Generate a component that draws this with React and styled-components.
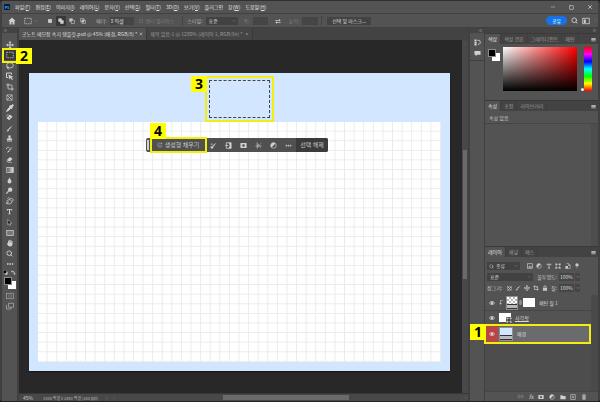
import React, { useState } from "react";
import styled, { createGlobalStyle, css } from "styled-components";
import {
  Lasso,
  Crop,
  Search,
  Ellipsis,
  Pipette,
  Link2,
  Move,
  X,
  Minus,
  Square,
  ChevronDown,
  ChevronUp,
  ChevronRight,
  ChevronLeft,
  ChevronsLeft,
  ChevronsRight,
} from "lucide-react";

const MENUS = [
  ["파일", "F"],
  ["편집", "E"],
  ["이미지", "I"],
  ["레이어", "L"],
  ["문자", "Y"],
  ["선택", "S"],
  ["필터", "T"],
  ["3D", "D"],
  ["보기", "V"],
  ["플러그인", ""],
  ["창", "W"],
  ["도움말", "H"],
];

// every drawing below sits on a 16 x 16 grid
const ICONS = {
  home: <path d="M8 1 1 8h2v7h4v-5h2v5h4V8h2z" fill="currentColor" />,
  marquee: (
    <rect x="1.5" y="2.5" width="13" height="11" fill="none" stroke="currentColor" strokeWidth="1.5" strokeDasharray="3 1.6" />
  ),
  selNew: <rect x="3" y="3" width="10" height="10" fill="currentColor" />,
  selAdd: <path d="M1 1h9v5h5v9H6v-5H1z" fill="currentColor" />,
  selSub: (
    <>
      <path d="M1 1h9v4H5v5H1z" fill="currentColor" />
      <rect x="6" y="6" width="8.5" height="8.5" fill="none" stroke="currentColor" strokeWidth="1.5" />
    </>
  ),
  selCross: (
    <>
      <path d="M1.5 1.5h9v9h-9zM5.5 5.5h9v9h-9z" fill="none" stroke="currentColor" strokeWidth="1.5" />
      <path d="M5.5 5.5h5v5h-5z" fill="currentColor" />
    </>
  ),
  swap: <path d="M1 5h10V2l4 4-4 3V7H1zM15 11H5V8l-4 4 4 3v-2h10z" fill="currentColor" />,
  layout: (
    <>
      <rect x="1.5" y="2.5" width="13" height="11" fill="none" stroke="currentColor" strokeWidth="1.6" />
      <path d="M3.5 5h4v7h-4z" fill="currentColor" />
    </>
  ),
  move: (
    <path
      d="M8 0l3 3.5H9V7h3.5V5L16 8l-3.5 3V9H9v3.5h2L8 16l-3-3.5h2V9H3.5v2L0 8l3.5-3v2H7V3.5H5z"
      fill="currentColor"
    />
  ),
  quick: (
    <>
      <path d="M1 2h10v3M1 2v9h3" fill="none" stroke="currentColor" strokeWidth="2" />
      <path d="M5 5l10 5-4 1 3 4-2 1-3-4-3 3z" fill="currentColor" />
    </>
  ),
  frame: (
    <path d="M2 2h12v12H2zM2 2l12 12M14 2 2 14" fill="none" stroke="currentColor" strokeWidth="1.5" />
  ),
  heal: (
    <>
      <path d="M9 1l6 5-8 8-6-5z" fill="currentColor" />
      <path d="M1 5c0-3 3-4 5-3" fill="none" stroke="currentColor" strokeWidth="1.5" />
      <path d="M6 6l4 4" stroke="#555" strokeWidth="1.5" />
    </>
  ),
  brush: <path d="M15 1 8 10 5.5 8zM5 9l2.5 2.5C7 14 4 15 1 14.5c2-1 2-4 4-5.500z" fill="currentColor" />,
  stamp: <path d="M5 1h6l-1 7h4v4H2V8h4zM2 13h12v2H2z" fill="currentColor" />,
  history: (
    <>
      <path d="M15 1 9 11 6.5 9zM6 10l2 2c-1 2-3 3-6 2.5 2-1 2-3 4-4.500z" fill="currentColor" />
      <path d="M1 7c0-4 4-5 7-3" fill="none" stroke="currentColor" strokeWidth="2" />
    </>
  ),
  eraser: <path d="M9 2l6 4-5 6H6l-4-3zM1 10l5 3.5h8V15H5L1 12z" fill="currentColor" />,
  gradient: (
    <>
      <defs>
        <linearGradient id="toolGradient">
          <stop offset="0" stopColor="#555" />
          <stop offset="1" stopColor="#ddd" />
        </linearGradient>
      </defs>
      <rect x="1.5" y="3" width="13" height="10" fill="url(#toolGradient)" stroke="currentColor" strokeWidth="1.5" />
    </>
  ),
  drop: <path d="M8 1c2 4 4.5 6 4.5 9a4.5 4.8 0 0 1-9 0C3.5 7 6 5 8 1z" fill="currentColor" />,
  dodge: (
    <>
      <circle cx="9.5" cy="6" r="5" fill="currentColor" />
      <path d="M6 9l-5 6" stroke="currentColor" strokeWidth="2.5" />
    </>
  ),
  pen: (
    <path
      d="M1 13c1-3 0-6 3-7l4-1 4 4-2 4-4 1zM8 5l3-3 4 4-3 3M1 13l5-4M3 3c2-2 4-2 5 0"
      fill="none"
      stroke="currentColor"
      strokeWidth="1.5"
    />
  ),
  type: <path d="M2 2h12v4h-1.5L12 4H9.2v8.5L11 13v1.5H5V13l1.8-.5V4H4l-.5 2H2z" fill="currentColor" />,
  path: <path d="M4 1l9 9H8.5l2 4-2 1-2-4L4 13z" fill="#111" stroke="currentColor" strokeWidth="1.3" />,
  rect: <rect x="1.5" y="3" width="13" height="10" fill="#777" stroke="currentColor" strokeWidth="1.5" />,
  hand: (
    <path
      d="M4 9V3.5h1.8V7h.6V1.5h1.8V7h.6V2h1.8v5.5h.6V4H13v6c0 3-1.5 5-4.5 5S4 13.5 1.5 9.5L3 8.5z"
      fill="currentColor"
    />
  ),
  mask: (
    <>
      <rect x="1" y="2.5" width="14" height="11" fill="none" stroke="currentColor" strokeWidth="1.3" />
      <circle cx="8" cy="8" r="3" fill="none" stroke="currentColor" strokeWidth="1.3" strokeDasharray="2 1" />
    </>
  ),
  screen: (
    <path d="M5 2.5h10v8H5zM1 6v8h9v-3" fill="none" stroke="currentColor" strokeWidth="1.5" />
  ),
  reset: (
    <>
      <rect x="5.5" y="5.5" width="9" height="9" fill="#ddd" />
      <rect x="1.5" y="1.5" width="9" height="9" fill="#000" stroke="#999" />
    </>
  ),
  turn: <path d="M4 1v3c6 0 8 2 8 7h3l-4 5-4-5h3c0-3-2-5-6-5v3L0 5z" fill="currentColor" />,
  adjust: (
    <>
      <circle cx="8" cy="8" r="6.2" fill="none" stroke="currentColor" strokeWidth="1.6" />
      <path d="M12.4 3.6A6.2 6.2 0 0 0 3.6 12.4z" fill="currentColor" />
    </>
  ),
  sparkle: (
    <>
      <path d="M10 2.5H6a4.5 5 0 0 0-4 5.5v1c0 3 2 5 6 5s5.5-2 5.5-5" fill="none" stroke="currentColor" strokeWidth="1.3" />
      <path d="M12 1l.8 2.2L15 4l-2.2.8L12 7l-.8-2.2L9 4l2.2-.8zM8 6l.7 1.8 1.8.7-1.8.7L8 11l-.7-1.8-1.8-.7 1.8-.7z" fill="currentColor" />
    </>
  ),
  brushCheck: (
    <>
      <path d="M15 1 8 11 5.5 8.5zM5 9l3 3-2 3H2l-1-5h2z" fill="currentColor" />
      <path d="M2 5h4M4 3v4" stroke="currentColor" strokeWidth="1.3" />
    </>
  ),
  invert: (
    <>
      <path d="M3 1.5h11v13H3z" fill="none" stroke="currentColor" strokeWidth="1.8" />
      <path d="M8 2h6v12H8l3-6zM1 7h6v2H1z" fill="currentColor" />
    </>
  ),
  maskSolid: (
    <path d="M1 2.5h14v11H1zM8 5a3 3 0 1 0 0 6 3 3 0 0 0 0-6z" fillRule="evenodd" fill="currentColor" />
  ),
  bucket: (
    <path d="M5 1v14M5 4l6 4-6 4M1 9h14M12 5l2-2M12 12l2 2" fill="none" stroke="currentColor" strokeWidth="1.4" />
  ),
  image: (
    <>
      <rect x="1.5" y="2" width="13" height="12" fill="none" stroke="currentColor" strokeWidth="1.8" />
      <path d="M3 12l3.5-5L9 10l2-2 2.5 4z" fill="currentColor" />
    </>
  ),
  shape: (
    <>
      <path d="M3.5 3.5h9v9h-9z" fill="none" stroke="currentColor" strokeWidth="1.5" />
      <path d="M1 1h4v4H1zM11 1h4v4h-4zM1 11h4v4H1zM11 11h4v4h-4z" fill="currentColor" />
    </>
  ),
  smart: (
    <>
      <path d="M4 1.5h6l4 4v9H7" fill="none" stroke="currentColor" strokeWidth="1.6" />
      <path d="M1 8h7v7H1zM9 2v5h5z" fill="currentColor" />
    </>
  ),
  toggle: (
    <>
      <circle cx="8" cy="5" r="4.5" fill="currentColor" />
      <path d="M8 9v6" stroke="#888" strokeWidth="2" />
    </>
  ),
  pixels: (
    <>
      <rect x="1.5" y="1.5" width="13" height="13" fill="none" stroke="currentColor" strokeWidth="1.3" />
      <path d="M3 3h3v3H3zM10 3h3v3h-3zM6.5 6.5h3v3h-3zM3 10h3v3H3zM10 10h3v3h-3z" fill="currentColor" />
    </>
  ),
  artboard: (
    <path d="M4 1v11h11M1 4h11v11M8 4l4 4" fill="none" stroke="currentColor" strokeWidth="1.8" />
  ),
  lock: (
    <>
      <path d="M2.5 7h11v8h-11z" fill="currentColor" />
      <path d="M5 7V5a3 3 0 0 1 6 0v2" fill="none" stroke="currentColor" strokeWidth="2" />
    </>
  ),
  eye: (
    <>
      <path d="M1 8c3.5-5.5 10.5-5.5 14 0-3.5 5.5-10.5 5.5-14 0z" fill="none" stroke="currentColor" strokeWidth="1.8" />
      <circle cx="8" cy="8" r="2.6" fill="currentColor" />
    </>
  ),
  clip: <path d="M13 2H6v8h3l-4 5-4-5h3V1h9z" fill="currentColor" />,
  folder: <path d="M1 3h5l2 2h7v9H1z" fill="currentColor" />,
  add: (
    <path d="M2 1.5h12v13H2zM8 5v6M5 8h6" fill="none" stroke="currentColor" strokeWidth="1.6" />
  ),
  trash: (
    <>
      <path d="M2 3.5h12M6 3V1h4v2" stroke="currentColor" strokeWidth="1.6" fill="none" />
      <path d="M3.5 5.5h9V15h-9z" fill="currentColor" opacity=".7" />
    </>
  ),
  menu: <path d="M1 3h14v2.5H1zM1 7h14v2.5H1zM1 11h14v2.5H1z" fill="currentColor" />,
  versions: (
    <>
      <path d="M1 1h5v4H1zM1 6h5v4H1zM1 11h5v4H1z" fill="currentColor" />
      <path d="M8 3h4c3 0 3 8 0 9H9" fill="none" stroke="currentColor" strokeWidth="2" />
    </>
  ),
  comment: <path d="M1 2h14v9H7l-3 4v-4H1z" fill="currentColor" />,
};

const Icon = ({ name, size = 8 }) => (
  <Glyph viewBox="0 0 16 16" width={size} height={size} aria-hidden="true">
    {ICONS[name]}
  </Glyph>
);

const TOOLS = [
  ["이동 도구", <Icon name="move" />],
  ["사각형 선택 윤곽 도구", <Icon name="marquee" />],
  ["올가미 도구", <Lasso size={8} strokeWidth={2.5} />],
  ["빠른 선택 도구", <Icon name="quick" />],
  ["자르기 도구", <Crop size={8} strokeWidth={2.5} />],
  ["프레임 도구", <Icon name="frame" size={7} />],
  ["스포이드 도구", <Pipette size={8} strokeWidth={3} fill="currentColor" />],
  ["복구 브러시 도구", <Icon name="heal" size={7} />],
  ["브러시 도구", <Icon name="brush" size={7} />],
  ["도장 도구", <Icon name="stamp" size={7} />],
  ["작업 내역 브러시", <Icon name="history" size={7} />],
  ["지우개 도구", <Icon name="eraser" size={7} />],
  ["그레이디언트 도구", <Icon name="gradient" />],
  ["흐림 효과 도구", <Icon name="drop" size={7} />],
  ["닷지 도구", <Icon name="dodge" size={7} />],
  ["펜 도구", <Icon name="pen" />],
  ["문자 도구", <Icon name="type" size={7} />],
  ["패스 선택 도구", <Icon name="path" size={7} />],
  ["사각형 도구", <Icon name="rect" />],
  ["손 도구", <Icon name="hand" />],
  ["돋보기 도구", <Search size={7} strokeWidth={3} />],
  ["도구 모음 편집", <Ellipsis size={8} strokeWidth={3} />],
];

const PanelTabs = ({ tabs }) => (
  <TabRow>
    {tabs.map((tab, i) => (
      <PanelTab key={tab} $active={i === 0}>
        {tab}
      </PanelTab>
    ))}
    <PanelMenu aria-label="패널 메뉴">
      <Icon name="menu" size={5} />
    </PanelMenu>
  </TabRow>
);

const DropDown = ({ label, value, icon, width }) => (
  <DropWrap $width={width}>
    {icon}
    <DropSelect aria-label={label}>
      <option>{value}</option>
    </DropSelect>
    <ChevronDown size={4} />
  </DropWrap>
);

const Percent = ({ id }) => (
  <PercentWrap>
    <PercentInput id={id} defaultValue="100%" />
    <PercentButton aria-label="값 조절">
      <ChevronDown size={4} />
    </PercentButton>
  </PercentWrap>
);

const App = () => {
  const [tool, setTool] = useState(1);

  return (
    <>
      <GlobalStyle />
      <AppWindow>
        <MenuBar>
          <Logo>Ps</Logo>
          {MENUS.map(([name, key]) => (
            <MenuItem key={name}>
              {name}
              {key && (
                <>
                  (<u>{key}</u>)
                </>
              )}
            </MenuItem>
          ))}
          <WindowButtons>
            <IconButton aria-label="최소화">
              <Minus size={6} />
            </IconButton>
            <IconButton aria-label="최대화">
              <Square size={5} strokeWidth={3} />
            </IconButton>
            <IconButton aria-label="닫기">
              <X size={6} strokeWidth={3} />
            </IconButton>
          </WindowButtons>
        </MenuBar>

        <OptionsBar>
          <OptionGroup $left={6}>
            <IconButton aria-label="홈">
              <Icon name="home" />
            </IconButton>
          </OptionGroup>
          <OptionGroup $left={8} $gap={2}>
            <IconButton aria-label="도구 사전 설정">
              <Icon name="marquee" />
            </IconButton>
            <ChevronDown size={4} />
          </OptionGroup>
          <OptionGroup $left={7} $gap={1}>
            <ModeButton aria-label="새 선택 영역">
              <Icon name="selNew" size={6} />
            </ModeButton>
            <ModeButton aria-label="선택 영역에 추가" $active>
              <Icon name="selAdd" size={6} />
            </ModeButton>
            <ModeButton aria-label="선택 영역에서 빼기">
              <Icon name="selSub" size={6} />
            </ModeButton>
            <ModeButton aria-label="선택 영역과 교차">
              <Icon name="selCross" size={6} />
            </ModeButton>
          </OptionGroup>
          <OptionGroup $left={8} $gap={3}>
            <label htmlFor="feather">페더:</label>
            <Field id="feather" defaultValue="0 픽셀" $width={24} />
          </OptionGroup>
          <OptionGroup $left={5} $gap={3} $dim>
            <Tick id="alias" type="checkbox" disabled />
            <label htmlFor="alias">앤티 앨리어스</label>
          </OptionGroup>
          <Separator $left={8} />
          <OptionGroup $left={4} $gap={3}>
            <span>스타일:</span>
            <DropDown label="스타일" value="표준" width={32} />
          </OptionGroup>
          <OptionGroup $left={6} $gap={3} $dim>
            <label htmlFor="w">폭:</label>
            <Field id="w" disabled $width={15} />
          </OptionGroup>
          <OptionGroup $left={7}>
            <IconButton aria-label="높이와 폭 교체">
              <Icon name="swap" size={6} />
            </IconButton>
          </OptionGroup>
          <OptionGroup $left={8} $gap={3} $dim>
            <label htmlFor="h">높이:</label>
            <Field id="h" disabled $width={16} />
          </OptionGroup>
          <Separator $left={3} />
          <DarkButton>선택 및 마스크...</DarkButton>
          <OptionRight>
            <ShareButton>공유</ShareButton>
            <IconButton aria-label="검색">
              <Search size={7} strokeWidth={3} />
            </IconButton>
            <IconButton aria-label="작업 영역">
              <Icon name="layout" />
            </IconButton>
            <ChevronDown size={3} />
          </OptionRight>
        </OptionsBar>

        <Workspace>
          <ToolColumn>
            <Collapse $start>
              <ChevronsRight size={5} />
            </Collapse>
            <ToolList>
              {TOOLS.map(([name, icon], i) => (
                <ToolButton key={name} aria-label={name} $active={i === tool} onClick={() => setTool(i)}>
                  {icon}
                </ToolButton>
              ))}
              <Callout $top={8} $left={0} $width={16} $height={15}>
                <Step $side="right">2</Step>
              </Callout>
            </ToolList>
            <SwatchTools>
              <Icon name="reset" size={5} />
              <Icon name="turn" size={5} />
            </SwatchTools>
            <ToolSwatches>
              <Swatches />
            </ToolSwatches>
            <ToolExtras>
              <IconButton aria-label="빠른 마스크 모드">
                <Icon name="mask" />
              </IconButton>
              <IconButton aria-label="화면 모드">
                <Icon name="screen" />
              </IconButton>
            </ToolExtras>
          </ToolColumn>

          <Document>
            <DocTabs>
              <DocTab $active>
                굿노트 메모장 속지 템플릿.psd @ 45% (배경, RGB/8) *
                <X size={4} strokeWidth={3} />
              </DocTab>
              <DocTab>
                제목 없음-1 @ 1200% (레이어 1, RGB/8#) *
                <X size={4} strokeWidth={3} />
              </DocTab>
            </DocTabs>
            <CanvasRow>
              <Canvas>
                <Artboard>
                  <GridPaper />
                  <Callout $top={3} $left={176} $width={69} $height={46}>
                    <Marquee />
                    <Step $side="left">3</Step>
                  </Callout>
                  <TaskBar>
                    <Grip />
                    <FillButton>
                      <Icon name="sparkle" size={6} />
                      생성형 채우기
                      <Callout $top={-1} $left={0} $width={57} $height={16}>
                        <Step $side="top">4</Step>
                      </Callout>
                    </FillButton>
                    <TaskIcons>
                      {["brushCheck", "invert", "maskSolid", "bucket", "adjust"].map((name) => (
                        <IconButton key={name} aria-label={name}>
                          <Icon name={name} size={7} />
                        </IconButton>
                      ))}
                      <IconButton aria-label="추가 옵션">
                        <Ellipsis size={7} strokeWidth={4} />
                      </IconButton>
                    </TaskIcons>
                    <DeselectButton>선택 해제</DeselectButton>
                  </TaskBar>
                </Artboard>
              </Canvas>
              <VerticalScroll>
                <ChevronUp size={4} />
                <VerticalThumb />
                <ChevronDown size={4} />
              </VerticalScroll>
            </CanvasRow>
            <StatusBar>
              <Zoom>45%</Zoom>
              <DocSize>3508 픽셀 x 2480 픽셀 (300 ppi)</DocSize>
              <ChevronRight size={4} />
              <ChevronLeft size={4} />
              <HorizontalTrack>
                <HorizontalThumb />
              </HorizontalTrack>
              <ChevronRight size={4} />
            </StatusBar>
          </Document>

          <IconRail>
            <Collapse>
              <ChevronsLeft size={5} />
            </Collapse>
            <RailGroup>
              <IconButton aria-label="작업 내역">
                <Icon name="versions" size={7} />
              </IconButton>
              <IconButton aria-label="댓글">
                <Icon name="comment" size={7} />
              </IconButton>
            </RailGroup>
          </IconRail>

          <Panels>
            <Collapse>
              <ChevronsRight size={5} />
            </Collapse>
            <PanelTabs tabs={["색상", "색상 견본", "그레이디언트", "패턴"]} />
            <ColorBody>
              <Swatches />
              <ColorField />
              <HueBar>
                <HueMarker />
              </HueBar>
            </ColorBody>
            <PanelTabs tabs={["속성", "조정", "라이브러리"]} />
            <PropsHead>속성 없음</PropsHead>
            <PropsBody />
            <PanelTabs tabs={["레이어", "채널", "패스"]} />
            <LayerOptions>
              <LayerOption>
                <DropDown label="필터 종류" value="종류" width={33} icon={<Search size={5} strokeWidth={3} />} />
                <FilterIcons>
                  {["image", "adjust", "type", "shape", "smart", "toggle"].map((name) => (
                    <Icon key={name} name={name} size={6} />
                  ))}
                </FilterIcons>
              </LayerOption>
              <LayerOption>
                <DropDown label="혼합 모드" value="표준" width={46} />
                <OptionLabel htmlFor="opacity">불투명도:</OptionLabel>
                <Percent id="opacity" />
              </LayerOption>
              <LayerOption>
                <span>잠그기:</span>
                <LockIcons>
                  <Icon name="pixels" size={5} />
                  <Icon name="brush" size={6} />
                  <Move size={6} strokeWidth={3} />
                  <Icon name="artboard" size={6} />
                  <Icon name="lock" size={6} />
                </LockIcons>
                <OptionLabel htmlFor="fill">칠:</OptionLabel>
                <Percent id="fill" />
              </LayerOption>
            </LayerOptions>
            <LayerList>
              <Layer>
                <EyeCell>
                  <Icon name="eye" size={6} />
                </EyeCell>
                <ClipMark>
                  <Icon name="clip" size={5} />
                </ClipMark>
                <Thumb $kind="checker" $width={12} $slider />
                <ChainMark>
                  <Link2 size={5} strokeWidth={3} />
                </ChainMark>
                <Thumb $kind="white" $width={12} />
                <LayerName>패턴 칠 1</LayerName>
              </Layer>
              <Layer $short>
                <EyeCell>
                  <Icon name="eye" size={6} />
                </EyeCell>
                <Thumb $kind="white" $width={12}>
                  <ShapeBadge>
                    <Icon name="shape" size={6} />
                  </ShapeBadge>
                </Thumb>
                <LayerName>
                  <u>사각형</u>
                </LayerName>
              </Layer>
              <Layer $active>
                <EyeCell $red>
                  <Icon name="eye" size={6} />
                </EyeCell>
                <Thumb $kind="blue" $width={14} $slider />
                <LayerName>배경</LayerName>
                <LayerCallout>
                  <Step $side="left">1</Step>
                </LayerCallout>
              </Layer>
            </LayerList>
            <PanelFooter>
              <Dimmed>
                <Link2 size={7} />
              </Dimmed>
              <FxButton>fx</FxButton>
              {["maskSolid", "adjust", "folder", "add", "trash"].map((name) => (
                <IconButton key={name} aria-label={name}>
                  <Icon name={name} size={6} />
                </IconButton>
              ))}
            </PanelFooter>
          </Panels>
        </Workspace>
      </AppWindow>
    </>
  );
};

const Swatches = () => (
  <SwatchPair>
    <BackSwatch />
    <FrontSwatch />
  </SwatchPair>
);

export default App;

const GlobalStyle = createGlobalStyle`
  * {
    box-sizing: border-box;
  }
  body {
    margin: 0;
    background: #1c1c1c;
  }
  body, button, input, select {
    font-family: "Noto Sans CJK KR", "Noto Sans", sans-serif;
    font-size: 5px;
    line-height: 8px;
    color: #c8c8c8;
  }
  button {
    padding: 0;
    border: 0;
    background: none;
  }
  svg {
    display: block;
    flex: none;
  }
`;

const Glyph = styled.svg`
  overflow: visible;
`;

const AppWindow = styled.div`
  display: flex;
  flex-direction: column;
  height: 100vh;
  padding: 0 2px;
  border-top: 1px solid #303030;
  border-bottom: 1px solid #2a2022;
  border-radius: 3px;
  background: #404040;
  overflow: hidden;
`;

const MenuBar = styled.header`
  display: flex;
  align-items: center;
  gap: 5px;
  height: 13px;
  padding-left: 2px;
  border-bottom: 1px solid #414141;
  background: #535353;
`;

const Logo = styled.span`
  width: 6px;
  height: 6px;
  border-radius: 1px;
  background: #001e36;
  color: #31a8ff;
  font-size: 4px;
  font-weight: 700;
  line-height: 6px;
  text-align: center;
`;

const MenuItem = styled.button`
  color: #e4e4e4;
  white-space: nowrap;
`;

const WindowButtons = styled.div`
  display: flex;
  gap: 13px;
  margin-left: auto;
  padding-right: 5px;
`;

const IconButton = styled.button`
  display: flex;
  align-items: center;
  justify-content: center;
  color: #d0d0d0;
`;

const OptionsBar = styled.div`
  display: flex;
  align-items: center;
  height: 14px;
  border-bottom: 1px solid #414141;
  background: #535353;
  white-space: nowrap;
`;

const OptionGroup = styled.div`
  display: flex;
  align-items: center;
  gap: ${({ $gap }) => $gap || 0}px;
  margin-left: ${({ $left }) => $left}px;
  color: ${({ $dim }) => ($dim ? "#7c7c7c" : "#b4b4b4")};
`;

const ModeButton = styled(IconButton)`
  width: 10px;
  height: 10px;
  background: ${({ $active }) => ($active ? "#383838" : "none")};
`;

const inputBox = css`
  height: 8px;
  padding: 0 1px;
  border: 0;
  background: #454545;
  color: #dcdcdc;
`;

const Field = styled.input`
  ${inputBox}
  width: ${({ $width }) => $width}px;
`;

const Tick = styled.input`
  appearance: none;
  width: 4px;
  height: 4px;
  margin: 0;
  border: 1px solid #666;
`;

const Separator = styled.span`
  width: 1px;
  height: 10px;
  margin-left: ${({ $left }) => $left}px;
  background: #444;
`;

const DropWrap = styled.div`
  display: flex;
  align-items: center;
  gap: 1px;
  width: ${({ $width }) => $width}px;
  height: 8px;
  padding: 0 2px;
  background: #424242;
  color: #aaa;
`;

const DropSelect = styled.select`
  flex: 1;
  min-width: 0;
  height: 8px;
  padding: 0 1px;
  border: 0;
  appearance: none;
  background: none;
  color: #d0d0d0;
`;

const DarkButton = styled.button`
  height: 8px;
  margin-left: 5px;
  padding: 0 5px;
  background: #434343;
  color: #d8d8d8;
`;

const OptionRight = styled.div`
  display: flex;
  align-items: center;
  gap: 4px;
  margin-left: auto;
  padding-right: 1px;
  color: #999;
`;

const ShareButton = styled.button`
  width: 21px;
  height: 9px;
  border-radius: 5px;
  background: #1473e6;
  color: #fff;
`;

const Workspace = styled.div`
  flex: 1;
  display: grid;
  grid-template-columns: 15px minmax(0, 1fr) 14px 114px;
  min-height: 0;
`;

const Collapse = styled.div`
  display: flex;
  align-items: center;
  justify-content: ${({ $start }) => ($start ? "flex-start" : "flex-end")};
  height: 5px;
  padding: 0 1px;
  background: #434343;
  color: #bbb;
`;

const ToolColumn = styled.nav`
  background: #535353;
`;

const ToolList = styled.div`
  position: relative;
  display: flex;
  flex-direction: column;
  justify-content: space-between;
  align-items: center;
  height: 229px;
  margin-top: 7px;
`;

const ToolButton = styled(IconButton)`
  width: 13px;
  height: 10px;
  background: ${({ $active }) => ($active ? "#383838" : "none")};
`;

const SwatchTools = styled.div`
  display: flex;
  justify-content: center;
  gap: 3px;
  margin-top: 1px;
  color: #ccc;
`;

const ToolSwatches = styled.div`
  display: flex;
  justify-content: center;
  margin-top: 2px;
`;

const SwatchPair = styled.div`
  position: relative;
  flex: none;
  width: 12px;
  height: 12px;
`;

const BackSwatch = styled.span`
  position: absolute;
  right: 0;
  bottom: 0;
  width: 8px;
  height: 8px;
  background: #fff;
`;

const FrontSwatch = styled.span`
  position: absolute;
  top: 0;
  left: 0;
  width: 8px;
  height: 8px;
  border: 1px solid #8c8c8c;
  background: #000;
`;

const ToolExtras = styled.div`
  display: flex;
  flex-direction: column;
  align-items: center;
  gap: 2px;
  margin-top: 3px;
  opacity: 0.7;
`;

const Document = styled.main`
  display: flex;
  flex-direction: column;
  min-width: 0;
  margin: 0 2px;
`;

const DocTabs = styled.div`
  display: flex;
  height: 12px;
  background: #434343;
`;

const DocTab = styled.button`
  display: flex;
  align-items: center;
  gap: 2px;
  padding: 0 3px;
  border-right: 1px solid #3a3a3a;
  background: ${({ $active }) => ($active ? "#535353" : "#454545")};
  color: ${({ $active }) => ($active ? "#dedede" : "#9a9a9a")};
  white-space: nowrap;
`;

const CanvasRow = styled.div`
  flex: 1;
  display: flex;
  min-height: 0;
`;

const Canvas = styled.div`
  flex: 1;
  display: flex;
  padding: 33px 12px 22px 10px;
  background: #282828;
`;

const Artboard = styled.div`
  position: relative;
  flex: 1;
  display: flex;
  padding: 49px 9px 9px;
  background: #d2e7ff;
  box-shadow: 0 1px 1px #171717;
`;

const GridPaper = styled.div`
  flex: 1;
  background-color: #fff;
  background-image: linear-gradient(to left, #ebebeb 1px, transparent 1px),
    linear-gradient(to top, #ebebeb 1px, transparent 1px);
  background-size: calc(100% / 42) calc(100% / 25);
`;

const outline = css`
  border: 2px solid #f2ee10;
  z-index: 2;
`;

// numbered highlight laid over the part it points to
const Callout = styled.div`
  position: absolute;
  top: ${({ $top }) => $top}px;
  left: ${({ $left }) => $left}px;
  width: ${({ $width }) => $width}px;
  height: ${({ $height }) => $height}px;
  ${outline}
`;

const sides = {
  left: "top: -2px; right: 100%;",
  right: "top: -2px; left: 100%;",
  top: "bottom: 100%; left: -2px;",
};

const Step = styled.span`
  position: absolute;
  ${({ $side }) => sides[$side]}
  width: 16px;
  height: 16px;
  background: #ffff00;
  color: #000;
  font-family: "Noto Sans", sans-serif;
  font-size: 14px;
  font-weight: 700;
  line-height: 16px;
  text-align: center;
`;

const Marquee = styled.div`
  height: 38px;
  margin: 2px;
  border: 1px dashed #444;
`;

const TaskBar = styled.div`
  position: absolute;
  top: 65px;
  left: 117px;
  display: flex;
  align-items: center;
  width: 182px;
  height: 14px;
  border-radius: 2px;
  background: #505050;
`;

const Grip = styled.span`
  width: 2px;
  height: 10px;
  margin: 0 1px;
  background: #d0d0d0;
`;

const FillButton = styled.button`
  position: relative;
  display: flex;
  align-items: center;
  justify-content: center;
  gap: 2px;
  width: 56px;
  height: 14px;
  font-size: 6px;
`;

const TaskIcons = styled.div`
  flex: 1;
  display: flex;
  justify-content: space-around;
`;

const DeselectButton = styled.button`
  width: 32px;
  height: 14px;
  border-radius: 0 2px 2px 0;
  background: #3b3b3b;
  font-size: 6px;
`;

const VerticalScroll = styled.div`
  display: flex;
  flex-direction: column;
  align-items: center;
  width: 6px;
  padding: 2px 0;
  background: #484848;
  color: #777;
`;

const VerticalThumb = styled.div`
  width: 4px;
  height: 37%;
  margin: 104px 0 auto;
  background: #6a6a6a;
`;

const StatusBar = styled.footer`
  display: flex;
  align-items: center;
  gap: 3px;
  height: 8px;
  border-top: 1px solid #383838;
  background: #484848;
  color: #888;
  white-space: nowrap;
`;

const Zoom = styled.span`
  width: 17px;
  padding-left: 4px;
  color: #ccc;
`;

const DocSize = styled.span`
  padding: 0 4px;
  color: #b4b4b4;
  font-size: 4px;
`;

const HorizontalTrack = styled.div`
  flex: 1;
  display: flex;
  padding-left: 104px;
`;

const HorizontalThumb = styled.div`
  width: 53%;
  height: 5px;
  background: #6a6a6a;
`;

const IconRail = styled.aside`
  background: #535353;
`;

const RailGroup = styled.div`
  display: flex;
  flex-direction: column;
  align-items: center;
  gap: 4px;
  padding: 6px 0 3px;
  border-bottom: 1px solid #404040;
`;

const Panels = styled.aside`
  display: flex;
  flex-direction: column;
  margin-left: 1px;
  background: #535353;
`;

const TabRow = styled.div`
  display: flex;
  height: 11px;
  border-top: 1px solid #3a3a3a;
  background: #434343;
`;

const PanelTab = styled.button`
  padding: 0 3px;
  border-right: 1px solid #3e3e3e;
  background: ${({ $active }) => ($active ? "#535353" : "none")};
  color: ${({ $active }) => ($active ? "#e2e2e2" : "#9c9c9c")};
  white-space: nowrap;
`;

const PanelMenu = styled(IconButton)`
  margin-left: auto;
  padding-right: 2px;
`;

const ColorBody = styled.div`
  display: grid;
  grid-template-columns: 12px minmax(0, 1fr) 8px;
  column-gap: 3px;
  align-items: center;
  height: 56px;
  padding: 3px 6px 9px 3px;

  & > :first-child {
    align-self: start;
    margin-top: 2px;
  }
`;

const ColorField = styled.div`
  align-self: stretch;
  margin-right: 4px;
  background: linear-gradient(to top, #000, transparent), linear-gradient(to right, #fff, #f00);
`;

const HueBar = styled.div`
  position: relative;
  align-self: stretch;
  background: linear-gradient(#f00, #f0f, #00f, #0ff, #0f0, #ff0, #f00);
`;

const HueMarker = styled.span`
  position: absolute;
  right: 100%;
  bottom: 0;
  width: 3px;
  height: 3px;
  border-radius: 50%;
  background: #eee;
`;

const PropsHead = styled.div`
  height: 13px;
  padding: 3px 4px;
  border-bottom: 1px solid #464646;
`;

const PropsBody = styled.div`
  height: 122px;
  border-right: 7px solid #4d4d4d;
`;

const LayerOptions = styled.div`
  display: flex;
  flex-direction: column;
  gap: 3px;
  padding: 5px 18px 3px 2px;
`;

const LayerOption = styled.div`
  display: flex;
  align-items: center;
  height: 8px;
  white-space: nowrap;
`;

const FilterIcons = styled.div`
  flex: 1;
  display: flex;
  justify-content: space-between;
  padding-left: 7px;
`;

const LockIcons = styled.div`
  flex: 1;
  display: flex;
  align-items: center;
  justify-content: space-between;
  padding: 0 3px 0 5px;
`;

const OptionLabel = styled.label`
  margin-left: auto;
  padding-right: 2px;
`;

const PercentWrap = styled.div`
  display: flex;
  gap: 1px;
`;

const PercentInput = styled.input`
  ${inputBox}
  width: 15px;
`;

const PercentButton = styled(IconButton)`
  width: 5px;
  background: #454545;
`;

const LayerList = styled.ul`
  flex: 1;
  margin: 0;
  padding: 0;
  border-right: 7px solid #4a4a4a;
  background: #4d4d4d;
  list-style: none;
`;

const Layer = styled.li`
  position: relative;
  display: flex;
  align-items: center;
  height: ${({ $short, $active }) => ($active ? 19 : $short ? 14 : 16)}px;
  border-bottom: 1px solid #464646;
  background: ${({ $active }) => ($active ? "#6b6b6b" : "#535353")};
`;

const EyeCell = styled.span`
  display: flex;
  align-items: center;
  align-self: stretch;
  justify-content: center;
  width: 13px;
  margin-right: 1px;
  background: ${({ $red }) => ($red ? "#b84444" : "none")};
  color: #eee;
`;

const ClipMark = styled.span`
  padding: 0 2px 0 0;
`;

const ChainMark = styled.span`
  transform: rotate(90deg);
`;

const fills = {
  white: "#fff",
  blue: "#d2e7ff",
  checker: "repeating-conic-gradient(#bbb 0 25%, #fff 0 50%) 0 0 / 4px 4px",
};

const Thumb = styled.span`
  position: relative;
  width: ${({ $width }) => $width}px;
  height: ${({ $slider }) => ($slider ? 14 : 9)}px;
  background: ${({ $kind }) => fills[$kind]};
  ${({ $slider }) =>
    $slider &&
    css`
      border: 1px solid #8f8f8f;
      &::after {
        content: "";
        position: absolute;
        right: 0;
        bottom: 0;
        left: 0;
        height: 3px;
        border-top: 1px solid #333;
        border-bottom: 1px solid #333;
        background: #bbb;
      }
    `}
`;

const ShapeBadge = styled.span`
  position: absolute;
  right: -1px;
  bottom: -1px;
  background: #444;
`;

const LayerName = styled.span`
  margin-left: 4px;
  color: #d8d8d8;
`;

const LayerCallout = styled.div`
  position: absolute;
  inset: -1px 0 -1px -1px;
  ${outline}
`;

const PanelFooter = styled.div`
  display: flex;
  align-items: center;
  justify-content: space-between;
  height: 10px;
  padding: 0 11px 0 32px;
  border-top: 1px solid #464646;
`;

const Dimmed = styled.span`
  opacity: 0.5;
`;

const FxButton = styled.button`
  font-size: 6px;
  font-style: italic;
`;
